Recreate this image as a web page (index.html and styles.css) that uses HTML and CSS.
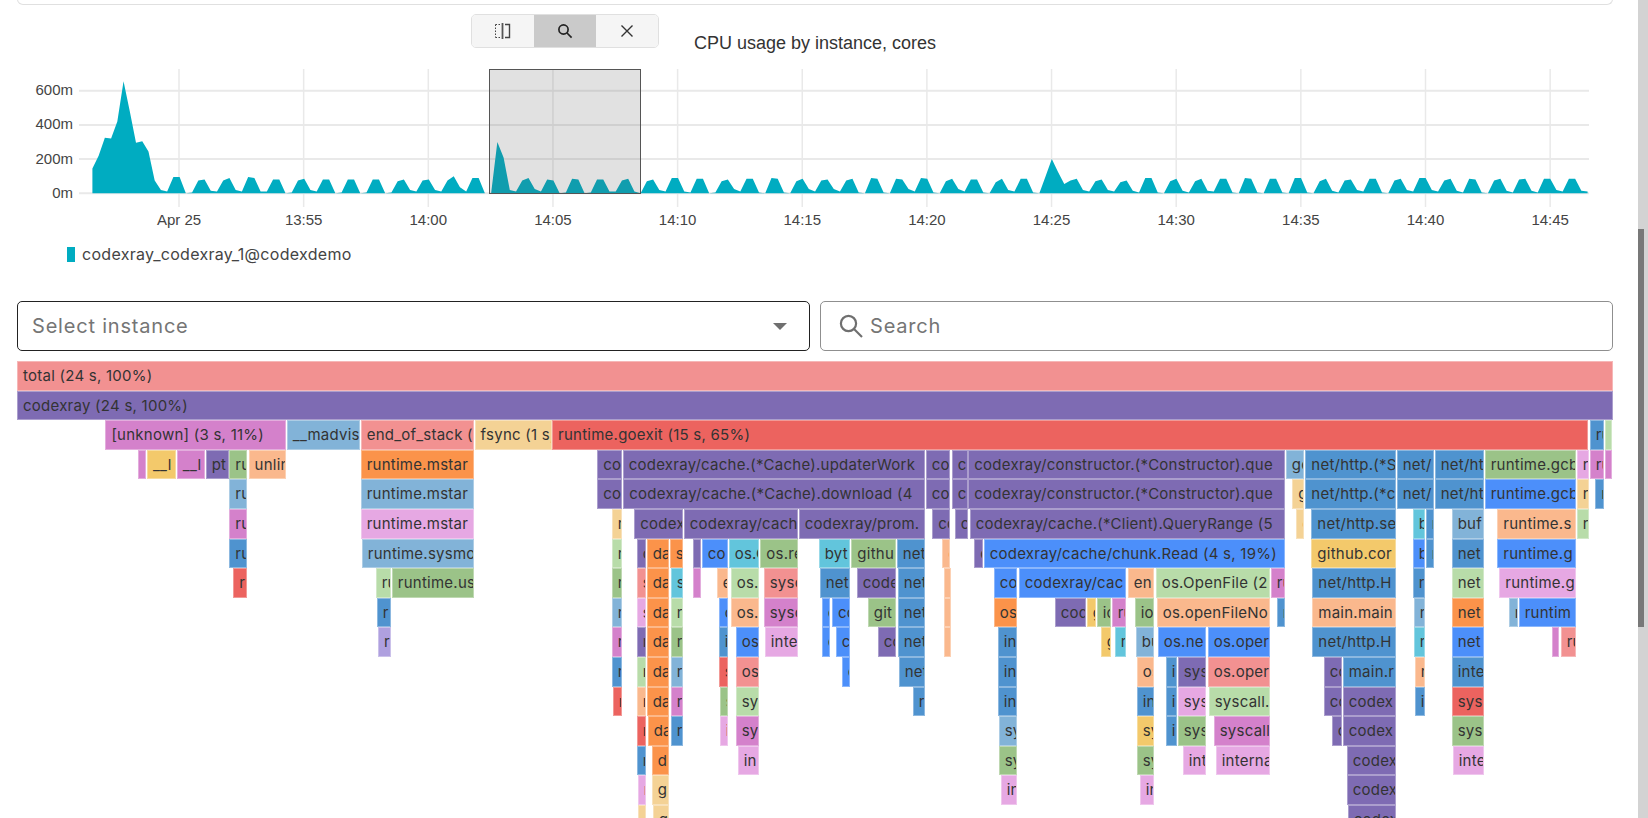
FILE: index.html
```html
<!DOCTYPE html>
<html lang="en">
<head>
    <meta charset="UTF-8">
    <meta name="viewport" content="width=device-width, initial-scale=1.0">
    <title>Profiling</title>
    <link rel="stylesheet" href="styles.css">
</head>
<body>
    <div class="page">
        <main class="content">
            <div class="top-card"></div>

            <!-- CPU chart -->
            <section class="chart">
                <div class="chart-tools">
                    <button class="tool" type="button" aria-label="Compare">
                        <svg width="18" height="18" viewBox="0 0 18 18" fill="none" stroke="#444">
                            <path d="M1.5 2.5h5M1.5 15.5h5M1.5 2.5v13" stroke-dasharray="1.5 1.5"/>
                            <path d="M8.5 1v16" stroke-width="1.8" stroke="#555"/>
                            <path d="M11 2.5h4.5v13H11" stroke-width="1.4"/>
                        </svg>
                    </button>
                    <button class="tool tool-active" type="button" aria-label="Zoom">
                        <svg width="18" height="18" viewBox="0 0 18 18" fill="none" stroke="#222" stroke-width="1.7">
                            <circle cx="7.5" cy="7.5" r="4.6"/>
                            <path d="M11 11l4.6 4.6"/>
                        </svg>
                    </button>
                    <button class="tool" type="button" aria-label="Clear">
                        <svg width="18" height="18" viewBox="0 0 18 18" fill="none" stroke="#333" stroke-width="1.4">
                            <path d="M3.5 3.5l11 11M14.5 3.5l-11 11"/>
                        </svg>
                    </button>
                </div>
                <h3 class="chart-title">CPU usage by instance, cores</h3>
                <svg id="chartPlot" class="chart-plot" width="1638" height="165"></svg>
                <div class="legend">
                    <span class="legend-mark"></span>
                    <span>codexray_codexray_1@codexdemo</span>
                </div>
            </section>

            <!-- Filters -->
            <div class="filters">
                <div class="field field-select">
                    <span class="placeholder">Select instance</span>
                    <span class="caret"></span>
                </div>
                <div class="field field-search">
                    <svg class="search-icon" width="26" height="26" viewBox="0 0 26 26" fill="none" stroke="#6f6f6f" stroke-width="2.2">
                        <circle cx="10.5" cy="10.5" r="7.6"/>
                        <path d="M16 16l8 8"/>
                    </svg>
                    <span class="placeholder">Search</span>
                </div>
            </div>

            <!-- Flame graph, filled by app.js -->
            <div id="flame" class="flame"></div>
        </main>

        <div class="scrollbar"><div class="scroll-thumb"></div></div>
    </div>

    <script src="app.js"></script>
</body>
</html>
```

FILE: styles.css
```css
html, body {
    margin: 0;
    padding: 0;
    height: 100%;
    overflow: hidden;
    background-color: #fff;
}

.page {
    display: flex;
    height: 818px;
}

.content {
    flex: 1;
    min-width: 0;
    padding: 0 25px 0 17px;
    overflow: hidden;
}

.top-card {
    height: 5px;
    margin-top: -1px;
    border: 1px solid #e0e0e0;
    border-top: none;
    border-radius: 0 0 6px 6px;
}

.scrollbar {
    width: 10px;
    padding-top: 229px;
    background-color: #d3d3d3;
}

.scroll-thumb {
    width: 6px;
    height: 398px;
    background-color: #787878;
}

/* chart */
.chart {
    position: relative;
    margin-left: -17px;
    margin-right: -25px;
    height: 295px;
}

.chart-tools {
    position: absolute;
    top: 9px;
    left: 471px;
    display: flex;
    border: 1px solid #e0e0e0;
    border-radius: 5px;
    overflow: hidden;
}

.tool {
    display: flex;
    align-items: center;
    justify-content: center;
    width: 62px;
    height: 32px;
    padding: 0;
    border: none;
    background-color: #f5f5f5;
}

.tool-active {
    background-color: #cacaca;
}

.chart-title {
    margin: 0;
    padding-top: 28px;
    padding-right: 8px;
    height: 31px;
    font: 400 18px/20px "Liberation Sans", Arial, sans-serif;
    color: #333;
    text-align: center;
}

.chart-plot {
    display: block;
}

.chart-plot text {
    font: 15px "Liberation Sans", Arial, sans-serif;
    fill: #444;
}

.legend {
    display: flex;
    align-items: center;
    gap: 7px;
    margin-left: 67px;
    margin-top: 16px;
    font: 16px/18px Inter, "Noto Sans", sans-serif;
    letter-spacing: 0.3px;
    color: #444;
}

.legend-mark {
    width: 8px;
    height: 15px;
    background-color: #00acc1;
}

/* filters */
.filters {
    display: grid;
    grid-template-columns: 1fr 1fr;
    gap: 10px;
    height: 50px;
    margin-top: 1px;
    margin-bottom: 10px;
}

.field {
    display: flex;
    align-items: center;
    box-sizing: border-box;
    border: 1px solid #8f8f8f;
    border-radius: 5px;
    padding: 0 14px;
    font: 400 20px "Inter", "Noto Sans", sans-serif;
    letter-spacing: 0.8px;
    color: #757575;
}

.field-select {
    justify-content: space-between;
    border-color: #222;
}

.field-search {
    gap: 6px;
    padding-left: 17px;
}

.caret {
    width: 0;
    height: 0;
    margin-right: 8px;
    border-left: 7px solid transparent;
    border-right: 7px solid transparent;
    border-top: 7px solid #6f6f6f;
}

/* flame graph */
.flame {
    position: relative;
    height: 474px;
    overflow: hidden;
    font: 400 15px "Inter", "Noto Sans", sans-serif;
    letter-spacing: 0.25px;
    color: #333;
}

.flame-row {
    position: relative;
    height: 29.6px;
}

.cell {
    position: absolute;
    top: 0;
    bottom: 0;
    box-sizing: border-box;
    border: 1px solid rgba(255, 255, 255, 0.35);
    padding-left: 5px;
    line-height: 27px;
    white-space: nowrap;
    overflow: hidden;
}

.c-salmon { background-color: #f29191; }
.c-purple { background-color: #7e6bb3; }
.c-orchid { background-color: #d481cb; }
.c-sky { background-color: #82b3d8; }
.c-cream { background-color: #f4d295; }
.c-red { background-color: #ec635f; }
.c-orange { background-color: #fb934a; }
.c-lilac { background-color: #e6a8e3; }
.c-steel { background-color: #4f93cf; }
.c-green { background-color: #9bc388; }
.c-mint { background-color: #b8dca9; }
.c-peach { background-color: #fab88d; }
.c-gold { background-color: #f3c96b; }
.c-blue { background-color: #4c8ffa; }
.c-cyan { background-color: #62c5dc; }
.c-lavender { background-color: #afa0df; }
```

FILE: app.js
```js
// CPU series, one sample per 15s, four samples per bump after the early load
const cpu = [145, 220, 325, 320, 420, 655, 480, 295, 305, 245, 75, 20, 10, 95, 95, 0,
    5, 75, 80, 15, 10, 75, 90, 20, 10, 95, 90, 10, 10, 80, 80, 0, 5, 75, 85, 20, 10, 80, 80, 0,
    5, 80, 80, 0, 5, 80, 80, 0, 5, 70, 80, 20, 10, 75, 80, 20, 10, 75, 100, 35, 10, 90, 90, 0,
    0, 300, 210, 20, 10,
    75, 90, 25, 10, 80, 75, 0, 5, 85, 80, 0, 5, 80, 80, 10, 10, 75, 85, 10, 0,
    70, 80, 20, 10, 90, 90, 10, 5, 85, 85, 0, 5, 70, 80, 25, 10, 85, 85, 5, 0,
    90, 85, 5, 0, 70, 85, 25, 10, 75, 80, 25, 10, 75, 85, 5, 0, 90, 85, 5, 0,
    85, 80, 25, 10, 90, 85, 5, 0, 70, 85, 25, 10, 80, 80, 5, 0, 65, 85, 20, 10, 85, 85, 5, 0,
    100, 200, 125, 55, 75, 85, 20, 10, 70, 80, 20, 10, 65, 75, 15, 5,
    90, 90, 5, 0, 70, 85, 15, 5, 70, 85, 15, 10, 85, 85, 5, 0, 90, 85, 5, 0,
    85, 85, 5, 0, 90, 90, 5, 0, 70, 85, 15, 5, 75, 80, 20, 10, 85, 85, 5, 0,
    75, 85, 20, 10, 90, 90, 20, 10, 75, 85, 15, 5, 85, 80, 5, 0, 75, 85, 15, 5,
    80, 85, 15, 5, 85, 85, 20, 10, 85, 85, 15, 10];

const svgNs = 'http://www.w3.org/2000/svg';
const plot = document.getElementById('chartPlot');

function el(name, attrs, text) {
    const node = document.createElementNS(svgNs, name);
    for (const key in attrs) node.setAttribute(key, attrs[key]);
    if (text) node.textContent = text;
    plot.appendChild(node);
    return node;
}

// svg is placed at y=64 of the page
const toY = v => 129.3 - v * (102.6 / 600);
const stepX = 6.23;

// horizontal grid
[[0, '0m'], [200, '200m'], [400, '400m'], [600, '600m']].forEach(([v, label]) => {
    el('line', { x1: 79, x2: 1589, y1: toY(v), y2: toY(v), stroke: '#e9e9e9', 'stroke-width': 2 });
    el('text', { x: 73, y: toY(v) + 4.5, 'text-anchor': 'end' }, label);
});

// vertical grid
['Apr 25', '13:55', '14:00', '14:05', '14:10', '14:15', '14:20', '14:25', '14:30', '14:35', '14:40', '14:45'].forEach((label, i) => {
    const x = 179 + i * 124.65;
    el('line', { x1: x, x2: x, y1: 5, y2: 143, stroke: '#e9e9e9', 'stroke-width': 1.5 });
    el('text', { x: x, y: 161, 'text-anchor': 'middle' }, label);
});

// area
let points = '92.4,' + toY(0);
let lastX = 92.4;
cpu.forEach((v, i) => {
    lastX = Math.min(92.4 + i * stepX, 1589);
    points += ' ' + lastX + ',' + toY(v);
});
points += ' ' + lastX + ',' + toY(0);
el('polygon', { points: points, fill: '#00acc1' });

// zoom selection
el('rect', { x: 489.5, y: 5.5, width: 151, height: 124, fill: 'rgba(90, 90, 90, 0.18)', stroke: '#555' });

// flame graph: row -> [left, right, label, colour]
const rows = [
    [[17, 1613, 'total (24 s, 100%)', 'salmon']],
    [[17, 1613, 'codexray (24 s, 100%)', 'purple']],
    [[105.4, 285.7, '[unknown] (3 s, 11%)', 'orchid'], [286.8, 359.6, '__madvis', 'sky'], [360.7, 473.6, 'end_of_stack (', 'salmon'],
        [474.6, 552, 'fsync (1 s,', 'cream'], [552, 1588.3, 'runtime.goexit (15 s, 65%)', 'red'], [1589.7, 1604.3, 'ru', 'steel'], [1605.3, 1612.5, '', 'mint']],
    [[138.2, 146.4, '', 'orchid'], [147, 175.7, '__l', 'gold'], [176.8, 204.6, '__l', 'orchid'], [205.7, 228.6, 'pt', 'purple'],
        [229.3, 247.5, 'ru', 'green'], [248.6, 285.7, 'unlin', 'peach'], [360.7, 473.6, 'runtime.mstar', 'orange'],
        [597.3, 621.7, 'co', 'purple'], [622.7, 924.7, 'codexray/cache.(*Cache).updaterWork', 'purple'], [925.7, 950.3, 'co', 'purple'],
        [951.7, 967.7, 'c', 'purple'], [968.3, 1284.7, 'codexray/constructor.(*Constructor).que', 'purple'], [1285.7, 1304.3, 'go', 'sky'],
        [1305.3, 1395.7, 'net/http.(*S', 'steel'], [1396.7, 1433.7, 'net/', 'steel'], [1434.7, 1483.7, 'net/ht', 'steel'],
        [1484.7, 1575.7, 'runtime.gcb', 'green'], [1576.7, 1588.7, 'r', 'lilac'], [1589.7, 1604.3, 'ru', 'orchid'], [1605.3, 1612.5, '', 'orchid']],
    [[229.3, 247.5, 'ru', 'sky'], [360.7, 473.6, 'runtime.mstar', 'sky'], [597.3, 621.7, 'co', 'purple'],
        [623.3, 924.7, 'codexray/cache.(*Cache).download (4', 'purple'], [925.7, 950.3, 'co', 'purple'], [951.7, 967.7, 'c', 'purple'],
        [968.3, 1284.7, 'codexray/constructor.(*Constructor).que', 'purple'], [1292.3, 1304.3, 'g', 'cream'], [1305.3, 1395.7, 'net/http.(*c', 'steel'],
        [1396.7, 1433.7, 'net/', 'steel'], [1434.7, 1483.7, 'net/ht', 'steel'], [1484.7, 1575.7, 'runtime.gcb', 'blue'],
        [1576.7, 1588.7, 'r', 'cream'], [1595.3, 1604.3, 'r', 'steel']],
    [[229.3, 247.5, 'ru', 'orchid'], [360.7, 473.6, 'runtime.mstar', 'lilac'], [611.7, 621.7, 'r', 'cream'], [634.3, 682.7, 'codex', 'purple'],
        [683.7, 797.7, 'codexray/cach', 'purple'], [798.7, 924.7, 'codexray/prom.', 'purple'], [932.3, 950.3, 'co', 'purple'], [954.7, 967.7, 'c', 'purple'],
        [969.7, 1284.7, 'codexray/cache.(*Client).QueryRange (5', 'purple'], [1296.3, 1304.3, 'e', 'cream'], [1311.3, 1395.7, 'net/http.se', 'steel'],
        [1412.7, 1424.7, 'b', 'cyan'], [1425.7, 1433.7, 'r', 'steel'], [1451.7, 1483.7, 'buf', 'sky'], [1497.3, 1575.7, 'runtime.s', 'peach'], [1576.7, 1588.7, 'r', 'mint']],
    [[229.3, 247.5, 'ru', 'steel'], [361.8, 473.6, 'runtime.sysmo', 'sky'], [611.7, 621.7, 'r', 'mint'], [636.7, 645.7, 'c', 'purple'], [646.7, 668.7, 'da', 'orange'],
        [669.7, 682.7, 's', 'orange'], [693.3, 700.7, '', 'purple'], [701.7, 727.7, 'co', 'blue'], [728.7, 759.3, 'os.O', 'cyan'], [760.3, 797.7, 'os.re', 'green'],
        [818.7, 850.3, 'byt', 'cyan'], [851.3, 895.7, 'githu', 'green'], [896.7, 924.7, 'net', 'steel'], [942.3, 950.3, 'e', 'peach'], [974.3, 982.7, 'c', 'purple'],
        [983.7, 1284.7, 'codexray/cache/chunk.Read (4 s, 19%)', 'blue'], [1311.3, 1395.7, 'github.cor', 'gold'], [1412.7, 1424.7, 'b', 'blue'], [1425.7, 1433.7, 'r', 'steel'],
        [1451.7, 1483.7, 'net', 'steel'], [1497.3, 1575.7, 'runtime.g', 'blue']],
    [[233.2, 247.5, 'ru', 'red'], [375.7, 390.7, 'ru', 'mint'], [391.8, 473.6, 'runtime.us', 'green'], [611.7, 621.7, 'r', 'green'], [636.7, 645.7, 's', 'salmon'],
        [646.7, 668.7, 'da', 'orange'], [670.7, 682.7, 's', 'cyan'], [693.3, 700.7, '', 'orchid'], [716.7, 727.7, 'e', 'peach'], [730.7, 759.3, 'os.S', 'mint'],
        [763.7, 797.7, 'sysc', 'salmon'], [819.7, 850.3, 'net', 'steel'], [856.7, 895.7, 'code', 'purple'], [897.7, 924.7, 'net', 'steel'], [943.7, 950.3, 'e', 'peach'],
        [993.7, 1017.3, 'co', 'blue'], [1018.7, 1126.3, 'codexray/cac', 'blue'], [1127.7, 1154.3, 'en', 'peach'], [1155.7, 1269.7, 'os.OpenFile (2', 'mint'], [1270.7, 1284.7, 'ru', 'orchid'],
        [1312.3, 1395.7, 'net/http.H', 'steel'], [1412.7, 1424.7, 'r', 'steel'], [1451.7, 1483.7, 'net', 'mint'], [1499.3, 1575.7, 'runtime.g', 'lilac']],
    [[376.8, 390.7, 'r', 'steel'], [611.7, 621.7, 'r', 'sky'], [636.7, 645.7, 's', 'lilac'], [646.7, 668.7, 'da', 'orange'], [670.7, 682.7, 'r', 'mint'], [718.7, 727.7, 'c', 'blue'],
        [730.7, 759.3, 'os.S', 'peach'], [763.7, 797.7, 'sysc', 'orchid'], [821.7, 830.3, 'c', 'blue'], [832, 850.3, 'co', 'blue'], [867.7, 895.7, 'git', 'green'], [897.7, 924.7, 'net', 'steel'],
        [943.7, 950.3, 'e', 'peach'], [993.7, 1017.3, 'os', 'orange'], [1054.7, 1085.7, 'cod', 'purple'], [1086.7, 1095.7, 'g', 'gold'], [1096.7, 1110.7, 'io', 'green'], [1111.7, 1126.3, 'ru', 'orchid'],
        [1134.7, 1154.3, 'io', 'green'], [1156.7, 1269.7, 'os.openFileNo', 'peach'], [1276.7, 1284.7, 'r', 'steel'], [1312.3, 1395.7, 'main.main', 'peach'], [1413.7, 1424.7, 'r', 'sky'],
        [1451.7, 1483.7, 'net', 'orange'], [1508.7, 1517.7, 'r', 'sky'], [1518.7, 1575.7, 'runtim', 'blue']],
    [[377.9, 390.7, 'r', 'lavender'], [611.7, 621.7, 'r', 'orchid'], [636.7, 645.7, 'r', 'purple'], [646.7, 668.7, 'da', 'orange'], [670.7, 682.7, 'r', 'green'], [718.7, 727.7, 'i', 'steel'],
        [735.7, 759.3, 'os', 'blue'], [764.7, 797.7, 'inte', 'lilac'], [821.7, 830.3, 'c', 'blue'], [835.7, 850.3, 'c', 'blue'], [877.7, 895.7, 'co', 'purple'], [897.7, 924.7, 'net', 'steel'],
        [943.7, 950.3, 'e', 'peach'], [997.7, 1017.3, 'in', 'steel'], [1100.7, 1110.7, 'g', 'gold'], [1114.7, 1126.3, 'r', 'cyan'], [1135.7, 1154.3, 'bu', 'sky'], [1157.7, 1206.3, 'os.ne', 'blue'],
        [1207.7, 1269.7, 'os.oper', 'blue'], [1312.3, 1395.7, 'net/http.H', 'steel'], [1413.7, 1424.7, 'r', 'cyan'], [1451.7, 1483.7, 'net', 'blue'], [1551.7, 1559.3, 'r', 'orchid'], [1560.7, 1575.7, 'ru', 'salmon']],
    [[611.7, 621.7, 'r', 'steel'], [636.7, 645.7, 'r', 'mint'], [646.7, 668.7, 'da', 'orange'], [670.7, 682.7, 'r', 'sky'], [718.7, 727.7, 's', 'red'], [735.7, 759.3, 'os', 'salmon'],
        [841.7, 850.3, 'c', 'blue'], [898.7, 924.7, 'net', 'steel'], [997.7, 1017.3, 'in', 'steel'], [1136.7, 1154.3, 'os', 'peach'], [1165.7, 1176.7, 'i', 'steel'], [1177.7, 1206.3, 'sys', 'purple'],
        [1207.7, 1269.7, 'os.oper', 'salmon'], [1323.7, 1341.7, 'co', 'purple'], [1342.7, 1395.7, 'main.r', 'steel'], [1414.7, 1424.7, 'r', 'peach'], [1451.7, 1483.7, 'inte', 'steel']],
    [[612.7, 621.7, 'r', 'red'], [636.7, 645.7, 'r', 'peach'], [646.7, 668.7, 'da', 'orange'], [670.7, 682.7, 'r', 'orchid'], [719.7, 727.7, 's', 'green'], [735.7, 759.3, 'sy', 'mint'],
        [912.7, 924.7, 'r', 'steel'], [997.7, 1017.3, 'in', 'steel'], [1136.7, 1154.3, 'in', 'steel'], [1165.7, 1176.7, 'i', 'steel'], [1177.7, 1206.3, 'sys', 'lilac'],
        [1208.7, 1269.7, 'syscall.', 'mint'], [1323.7, 1341.7, 'co', 'purple'], [1342.7, 1395.7, 'codex', 'purple'], [1414.7, 1424.7, 'i', 'steel'], [1451.7, 1483.7, 'sysc', 'red']],
    [[636.7, 645.7, 'r', 'red'], [647.7, 668.7, 'da', 'orange'], [670.7, 682.7, 'r', 'steel'], [719.7, 727.7, 'i', 'lilac'], [735.7, 759.3, 'sy', 'orchid'], [998.7, 1017.3, 'sy', 'sky'],
        [1136.7, 1154.3, 'sy', 'gold'], [1165.7, 1176.7, 'i', 'steel'], [1177.7, 1206.3, 'sys', 'green'], [1213.7, 1269.7, 'syscall', 'orchid'], [1331.7, 1341.7, 'c', 'purple'],
        [1342.7, 1395.7, 'codex', 'purple'], [1451.7, 1483.7, 'sysc', 'green']],
    [[636.7, 645.7, 'r', 'steel'], [651.7, 668.7, 'd', 'orange'], [737.7, 759.3, 'in', 'lilac'], [998.7, 1017.3, 'sy', 'green'], [1136.7, 1154.3, 'sy', 'green'],
        [1182.7, 1206.3, 'int', 'lilac'], [1215.7, 1269.7, 'interna', 'lilac'], [1346.7, 1395.7, 'codex', 'purple'], [1452.7, 1483.7, 'inte', 'lilac']],
    [[637.7, 645.7, 'r', 'lilac'], [651.7, 668.7, 'g', 'cream'], [1000.7, 1017.3, 'in', 'lilac'], [1139.7, 1154.3, 'in', 'lilac'], [1346.7, 1395.7, 'codex', 'purple']],
    [[637.7, 645.7, '', 'cream'], [652.7, 668.7, 'g', 'cream'], [1347.7, 1395.7, 'codex', 'purple']]
];

const flame = document.getElementById('flame');
const offset = 17; // flame graph starts at the content edge

rows.forEach(cells => {
    const row = document.createElement('div');
    row.className = 'flame-row';
    cells.forEach(([left, right, label, colour]) => {
        const cell = document.createElement('div');
        cell.className = 'cell c-' + colour;
        cell.style.left = (left - offset) + 'px';
        cell.style.width = (right - left) + 'px';
        cell.textContent = label;
        row.appendChild(cell);
    });
    flame.appendChild(row);
});
```
